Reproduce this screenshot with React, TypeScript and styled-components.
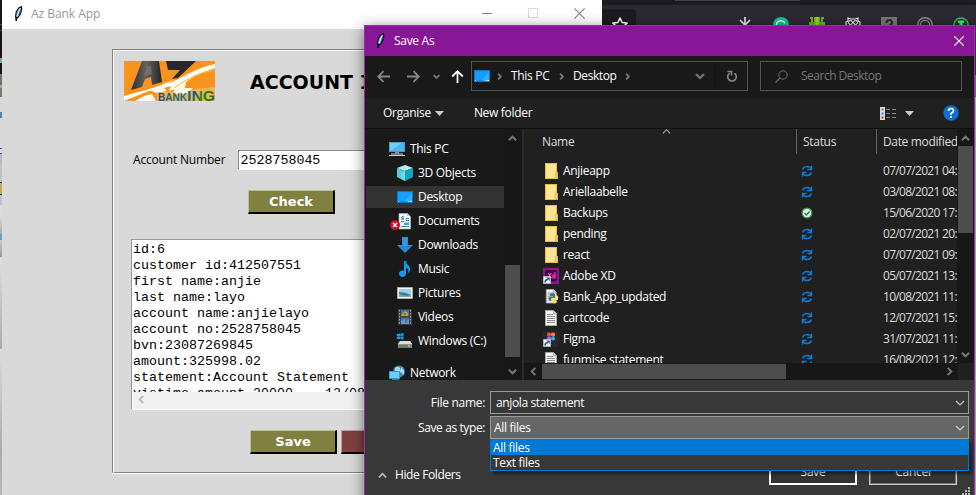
import React from "react";
import styled, { createGlobalStyle } from "styled-components";

const Global = createGlobalStyle`
  * { box-sizing: border-box; }
  body { margin: 0; background: #2b2a33; overflow: hidden; }
  svg { display: block; flex: none; }
`;

const Desktop = styled.div`
  position: relative;
  width: 976px;
  height: 495px;
  overflow: hidden;
  background: #2b2a33;
  font: 12px/16px "Open Sans", "Noto Sans", sans-serif;
`;

/* Label with an individually tuned tracking */
const Text = styled.span<{ $ls?: number; $c?: string }>`
  white-space: pre;
  letter-spacing: ${(p) => p.$ls ?? -0.3}px;
  color: ${(p) => p.$c ?? "#fff"};
`;

/* ---------- windows behind ---------- */
const Browser = styled.div`
  height: 495px;
  padding-left: 602px;
  background: linear-gradient(#1c1b22 5px, #2b2a33 5px, #2b2a33 120px, #ddd 120px);
`;
const BrowserTab = styled.div`
  width: 125px;
  height: 1px;
  margin-left: 73px;
  background: #42414d;
`;
const BrowserBar = styled.div`
  display: flex;
  align-items: flex-start;
  height: 20px;
  margin-top: 4px;
`;
const StarBox = styled.div`
  width: 34px;
  height: 20px;
  margin-top: 4px;
  padding: 8px 0 0 10px;
  border-radius: 0 4px 0 0;
  background: #1c1b22;
`;
const Extensions = styled.div`
  display: flex;
  gap: 20px;
  margin: 12px 0 0 101px;
`;
const EdgeStrip = styled.div`
  position: absolute;
  left: 0;
  top: 0;
  width: 2px;
  height: 495px;
  background: linear-gradient(
    #17161d 0 24px, #4a5058 24px 25px, #17161d 25px 30px, #4a5058 30px 31px, #15151c 31px 58px,
    #c89050 58px 60px, #68b0a0 60px 63px, #15151c 63px 74px, #707070 74px 85px, #d0a060 85px 88px,
    #777 88px 97px, #d5d9dd 97px 112px, #5580a0 112px 118px, #d8d8d8 118px 148px, #3557b5 148px 149px,
    #ddd 149px 153px, #2d6099 153px 154px, #bbb 154px 165px, #b8c4ce 165px 182px, #111 182px 183px,
    #c8a860 183px 194px, #111 194px 195px, #b8c4ce 195px 205px, #ddd 205px 215px, #aaa 234px,
    #68a0c8 234px 240px, #ccc 240px, #999 257px, #e0e0e0 257px, #aaa 349px, #ddd 349px, #aaa 450px, #b8b8b8 495px
  );
`;
const RightEdge = styled.div`
  position: absolute;
  left: 975px;
  top: 25px;
  width: 1px;
  height: 470px;
  background: linear-gradient(#55335f 50px, #c060d0 50px 72px, #e7c7ec 72px 425px, #ddd 425px);
`;

/* ---------- bank app ---------- */
const BankWindow = styled.section`
  position: absolute;
  left: 2px;
  top: 0;
  width: 600px;
  height: 495px;
  background: #d9d9d9;
`;
const BankTitle = styled.header`
  display: flex;
  align-items: center;
  height: 29px;
  padding: 0 17px 2px 9px;
  background: #fff;
`;
const BankCaption = styled.div`
  flex: 1;
  padding-left: 5px;
`;
const WindowButtons = styled.div`
  display: flex;
  gap: 35px;
`;
const Frame = styled.div`
  width: 474px;
  height: 425px;
  margin: 20px 0 0 110px;
  padding: 10px 10px 0;
  border: solid #fff;
  border-width: 0 1px 1px 0;
  box-shadow: inset 1px 1px #808080, inset 2px 2px #fff, inset -1px -1px #808080;
`;
const Brand = styled.div`
  display: flex;
  height: 42px;
  padding: 2px 0 0 2px;
`;
const Heading = styled.h1`
  margin: 9px 0 0 35px;
  font: bold 19px/24px "DejaVu Sans", sans-serif;
  white-space: pre;
`;
const SerifI = styled.span`
  font-family: "DejaVu Sans Mono", monospace;
`;
const NumberRow = styled.label`
  display: flex;
  align-items: center;
  height: 20px;
  margin: 49px 0 0 11px;
`;
const Entry = styled.div`
  width: 200px;
  height: 20px;
  margin-left: 13px;
  padding: 2px 1px;
  border: 1px solid #8a8a8a;
  border-right-color: #fff;
  border-bottom-color: #fff;
  background: #fff;
  font: 13.33px/15px "Liberation Mono", monospace;
`;
const BankButton = styled.button<{ $red?: boolean }>`
  height: 24px;
  width: 87px;
  padding: 0;
  border: solid;
  border-width: 1px 2px 2px 1px;
  border-color: ${(p) => (p.$red ? "#c49c9c #000 #000 #c49c9c" : "#c0c08f #000 #000 #c0c08f")};
  background: ${(p) => (p.$red ? "#804040" : "#808040")};
  color: #fff;
  font: bold 13px/21px "DejaVu Sans", sans-serif;
`;
const CheckRow = styled.div`
  margin: 20px 0 0 126px;
  display: flex;
`;
const Output = styled.div`
  width: 400px;
  height: 171px;
  margin: 25px 0 0 9px;
  border: 1px solid #999;
  border-right-color: #fff;
  border-bottom: 1px solid #fff;
  background: #fff;
`;
const OutputText = styled.pre`
  height: 152px;
  margin: 0;
  padding: 2px 1px 0;
  overflow: hidden;
  font: 13.33px/16px "Liberation Mono", monospace;
`;
const OutputScroll = styled.div`
  height: 17px;
  margin-left: 1px;
  padding: 3px 0 0 4px;
  background: #f0f0f0;
`;
const ButtonRow = styled.div`
  display: flex;
  gap: 4px;
  margin: 20px 0 0 128px;
`;

/* ---------- save dialog ---------- */
const Dialog = styled.section`
  position: absolute;
  left: 364px;
  top: 25px;
  width: 611px;
  height: 480px;
  border: 1px solid #9a2bab;
  background: #383838;
  box-shadow: 0 3px 14px rgba(0, 0, 0, 0.5);
`;
const DialogTitle = styled.header`
  display: flex;
  align-items: center;
  height: 30px;
  padding: 0 10px 1px 8px;
  background: #881798;
`;
const Grow = styled.div<{ $pl?: number }>`
  flex: 1;
  padding-left: ${(p) => p.$pl ?? 0}px;
`;
const NavBar = styled.nav`
  display: flex;
  align-items: center;
  height: 42px;
  padding: 0 12px 2px 12px;
  background: #191919;
`;
const NavArrows = styled.div`
  display: flex;
  align-items: center;
  width: 94px;
`;
const Gap = styled.i<{ $w: number }>`
  flex: none;
  width: ${(p) => p.$w}px;
`;
const AddressBar = styled.div`
  display: flex;
  align-items: center;
  width: 277px;
  height: 30px;
  padding-left: 2px;
  border: 1px solid #535353;
`;
const AddressCell = styled.div<{ $w: number }>`
  display: flex;
  width: ${(p) => p.$w}px;
`;
const Refresh = styled.div`
  display: flex;
  justify-content: center;
  align-items: center;
  width: 32px;
  height: 28px;
  border-left: 1px solid #121212;
`;
const SearchBox = styled.div`
  display: flex;
  align-items: center;
  width: 202px;
  height: 30px;
  margin-left: 12px;
  padding-left: 14px;
  border: 1px solid #535353;
`;
const Toolbar = styled.div`
  display: flex;
  align-items: center;
  height: 30px;
  padding: 0 15px 0 18px;
  background: #202020;
`;
const Body = styled.div`
  display: flex;
  height: 252px;
  border-top: 1px solid #111;
`;
const Tree = styled.ul`
  width: 139px;
  margin: 0;
  padding: 9px 0 0 1px;
  list-style: none;
  overflow: hidden;
  background: #191919;
`;
const TreeRow = styled.li<{ $top?: boolean; $active?: boolean; $mt?: number }>`
  display: flex;
  align-items: center;
  gap: 5px;
  height: 22px;
  margin: 0 0 2px;
  margin-top: ${(p) => p.$mt ?? 0}px;
  padding-left: ${(p) => (p.$top ? 23 : 31)}px;
  background: ${(p) => (p.$active ? "#333" : "transparent")};
`;
const VScroll = styled.div<{ $w: number }>`
  display: flex;
  flex-direction: column;
  align-items: center;
  justify-content: space-between;
  width: ${(p) => p.$w}px;
  padding: 5px 0 4px;
  background: #171717;
`;
const Thumb = styled.div<{ $w: number; $h: number; $mt?: number; $mb?: number }>`
  width: ${(p) => p.$w}px;
  height: ${(p) => p.$h}px;
  margin: ${(p) => p.$mt ?? 0}px 0 ${(p) => p.$mb ?? 0}px;
  background: #4d4d4d;
`;
const Splitter = styled.div`
  width: 4px;
  border-left: 1px solid #191919;
  border-right: 2px solid #2b2b2b;
  background: #191919;
`;
const Listing = styled.div`
  display: flex;
  flex-direction: column;
  width: 450px;
  background: #202020;
`;
const ListTop = styled.div`
  display: flex;
  height: 234px;
`;
const Table = styled.div`
  width: 433px;
  overflow: hidden;
`;
const TableRow = styled.div<{ $head?: boolean }>`
  display: grid;
  grid-template-columns: 272px 80px 90px;
  align-items: center;
  height: ${(p) => (p.$head ? 25 : 21)}px;
  margin-bottom: ${(p) => (p.$head ? 6 : 0)}px;
`;
const HeadCell = styled.div<{ $line?: boolean }>`
  display: flex;
  height: 25px;
  align-items: center;
  padding-left: ${(p) => (p.$line ? 6 : 18)}px;
  border-left: ${(p) => (p.$line ? "1px solid #636363" : "0")};
`;
const SortMark = styled.div`
  align-self: flex-start;
  margin: -2px 0 0 88px;
`;
const NameCell = styled.div`
  display: flex;
  align-items: center;
  gap: 4px;
  padding-left: 19px;
`;
const StatusCell = styled.div`
  padding-left: 5px;
`;
const DateCell = styled.div`
  padding-left: 7px;
`;
const HScroll = styled.div`
  display: flex;
  align-items: center;
  height: 17px;
  padding-left: 5px;
  background: linear-gradient(90deg, #171717 434px, #202020 434px);
`;
const Footer = styled.footer`
  padding-top: 11px;
`;
const Field = styled.div`
  display: flex;
  align-items: center;
  height: 23px;
  margin-bottom: 2px;
`;
const FieldLabel = styled.div`
  width: 125px;
  padding-right: 5px;
  text-align: right;
`;
const Combo = styled.div<{ $open?: boolean }>`
  display: flex;
  align-items: center;
  justify-content: space-between;
  width: 479px;
  height: 23px;
  padding: 0 3px 0 ${(p) => (p.$open ? 3 : 5)}px;
  border: 1px solid #9b9b9b;
  background: ${(p) => (p.$open ? "#666" : "#383838")};
`;
const Options = styled.div`
  position: absolute;
  left: 125px;
  top: 413px;
  width: 479px;
  height: 32px;
  border: 1px solid #0078d7;
  background: #383838;
  box-shadow: 3px 3px 3px rgba(0, 0, 0, 0.45);
`;
const Option = styled.div<{ $on?: boolean }>`
  height: 15px;
  padding-left: 2px;
  line-height: 15px;
  background: ${(p) => (p.$on ? "#0078d7" : "transparent")};
`;
const Actions = styled.div`
  display: flex;
  align-items: center;
  height: 30px;
  margin-top: 21px;
  padding-left: 13px;
`;
const ActionButton = styled.button<{ $main?: boolean }>`
  width: 88px;
  height: 25px;
  margin: -6px 12px 0 0;
  padding: 0;
  border: 1px solid ${(p) => (p.$main ? "#fff" : "#ccc")};
  box-shadow: ${(p) => (p.$main ? "inset 0 0 0 1px #fff" : "inset 0 0 0 1px #777")};
  background: #333;
  font: inherit;
`;
const Grip = styled.div`
  position: absolute;
  right: 3px;
  top: 461px;
`;

/* ---------- icons ---------- */
const Feather = () => (
  <svg width="15" height="17" viewBox="0 0 15 17">
    <path d="M5.200 15.500L4.600 11.500 5.200 7 7.600 3.200 10.400 1.600 10.800 4 9.400 9 7.200 12.300 6 12.800z" fill="#78afe8" stroke="#050505" strokeWidth="1.100" />
    <path d="M9 3.500L6.200 11" stroke="#fff" strokeWidth="1" />
    <path d="M9.800 4.500L7.900 10" stroke="#265c9c" strokeWidth="1" />
    <path d="M5.200 16l.6-4" stroke="#000" strokeWidth="1.300" />
  </svg>
);
const Cross = ({ c, s = 10 }: { c: string; s?: number }) => (
  <svg width={s} height={s} viewBox="0 0 10 10"><path d="M.3.3l9.4 9.4M9.7.3L.3 9.7" stroke={c} strokeWidth="1.1" /></svg>
);
const Chevron = ({ dir = "down", w = 8, c = "#777", sw = 1.8 }: { dir?: "up" | "down" | "left" | "right"; w?: number; c?: string; sw?: number }) => {
  const turn = { down: 0, left: 90, up: 180, right: 270 }[dir];
  return (
    <svg width={w} height={w} viewBox="0 0 10 10">
      <path d="M1 3l4 4 4-4" transform={`rotate(${turn} 5 5)`} fill="none" stroke={c} strokeWidth={(sw * 10) / w} />
    </svg>
  );
};
const Arrow = ({ turn = 0, c = "#858585" }: { turn?: number; c?: string }) => (
  <svg width="13" height="13" viewBox="0 0 13 13">
    <path d="M13 6.5H1.5M6.5 1.2L1.2 6.5l5.3 5.3" transform={`rotate(${turn} 6.5 6.5)`} fill="none" stroke={c} strokeWidth="1.8" />
  </svg>
);
const Star = () => (
  <svg width="16" height="16" viewBox="0 0 16 16">
    <path d="M8 1l2.1 4.5 5 .6-3.7 3.4 1 5L8 12l-4.4 2.5 1-5L.9 6.100l5-.6z" fill="none" stroke="#fbfbfe" strokeWidth="1.6" strokeLinejoin="round" />
  </svg>
);
const ExtensionIcons = () => (
  <>
    <svg width="16" height="16" viewBox="0 0 16 16"><path d="M8 0v8M3 3l5 5 5-5" fill="none" stroke="#eee" strokeWidth="1.6" /></svg>
    <svg width="16" height="16" viewBox="0 0 16 16"><circle cx="8" cy="8" r="8" fill="#15c39a" /><path d="M12 6.500A4.500 4.500 0 1 0 12 10" fill="none" stroke="#d8fff4" strokeWidth="1.500" /></svg>
    <svg width="16" height="16" viewBox="0 0 16 16"><path d="M0 5h16v4H0zM5 0h6v9H5zM1 0h3v2H1zM2 1h2v4H2zM12 0h3v2h-3zM12 1h2v4h-2z" fill="#76ad22" /><path d="M6.500 0h3v9h-3z" fill="#9ad62e" /></svg>
    <svg width="16" height="16" viewBox="0 0 16 16"><path d="M1 9V5l2-1V1l3 1h4l3-1v3l2 1v4" fill="#333" stroke="#eee" strokeWidth="1.200" /><circle cx="5.500" cy="5.500" r="2" fill="none" stroke="#fff" /><circle cx="10.500" cy="5.500" r="2" fill="none" stroke="#fff" /></svg>
    <svg width="16" height="16" viewBox="0 0 16 16"><path d="M0 0h16v16H0z" fill="#77777a" /><path d="M5.500 6c0-4 5.500-4 5.500-.5 0 2-2.500 2-2.500 4" fill="none" stroke="#29282e" strokeWidth="2" /></svg>
    <svg width="16" height="16" viewBox="0 0 16 16"><circle cx="8" cy="8" r="7.300" fill="none" stroke="#8d8d91" strokeWidth="1.400" /><circle cx="8" cy="8" r="4.600" fill="none" stroke="#8d8d91" strokeWidth="1.300" /></svg>
    <svg width="16" height="16" viewBox="0 0 16 16"><circle cx="8" cy="8" r="7" fill="#13351f" stroke="#2bc66a" strokeWidth="1.400" /><path d="M5 3.500h6V6H9.500v5h-3V6H5z" fill="#42e886" /></svg>
  </>
);
const BankLogo = () => (
  <svg width="91" height="40" viewBox="0 0 91 40">
    <defs>
      <linearGradient id="ink" x1="0" x2="1"><stop offset="0" stopColor="#292f34" /><stop offset=".5" stopColor="#68625d" /><stop offset="1" stopColor="#242426" /></linearGradient>
      <linearGradient id="word" gradientUnits="userSpaceOnUse" x1="34" y1="0" x2="91" y2="0"><stop offset="0" stopColor="#164d78" /><stop offset=".5" stopColor="#1b7396" /><stop offset=".68" stopColor="#17558a" /><stop offset=".74" stopColor="#2f8228" /><stop offset="1" stopColor="#166b2a" /></linearGradient>
    </defs>
    <path d="M0 0h91v40H0z" fill="#f7931e" />
    <path d="M7 29L18 0h17l3 21-10 3-1-8-6 2-3 8z" fill="url(#ink)" />
    <path d="M23 5l4 0 1 8-8 2z" fill="#7b7671" opacity=".7" />
    <path d="M42 0h30L54 17l-6 1 8-9H44z" fill="#29272a" />
    <path d="M0 36C20 30 42 25 58 16 69 10 80 5 91 3v4C78 12 70 20 60 27L32 32 26 29 18 33 12 40H0z" fill="#fffaf0" />
    <path d="M0 35C22 29 40 25 55 15L38 26 0 38z" fill="#fff" />
    <path d="M0 40l10-4 10-4 8 0 4 8z" fill="#f7931e" />
    <path d="M11 40l9-5 8-2 4 7z" fill="#fffaf0" />
    <path d="M40 27l7-2-3 6zM62 21C74 12 82 10 91 8v10c-10 1-20 3-30 9z" fill="#f7931e" />
    <path d="M50 27Q72 11 91 9" fill="none" stroke="#f5c040" />
    <path d="M33 32l28-3 30-3v14H33z" fill="#efb552" />
    <path d="M50 27h19l-7 6H50z" fill="#f9f5d8" />
    <text x="34" y="40" fontFamily="Liberation Sans" fontWeight="bold" fontSize="10.500" textLength="29" lengthAdjust="spacingAndGlyphs" fill="url(#word)">BANK</text>
    <text x="63" y="40" fontFamily="Liberation Sans" fontWeight="bold" fontSize="15" textLength="28" lengthAdjust="spacingAndGlyphs" fill="url(#word)">ING</text>
  </svg>
);
const DesktopIcon = () => (
  <svg width="16" height="16" viewBox="0 0 16 16"><path d="M0 2h16v12H0z" fill="#0078c8" /><path d="M1 3h14v9.500H1z" fill="#14a0fa" /><path d="M7 12.500L15 4v8.500z" fill="#2bb0ff" /><path d="M1 12.500h1M11 12.500h1M13 12.500h2" stroke="#fff" /></svg>
);
const PcIcon = () => (
  <svg width="16" height="16" viewBox="0 0 16 16"><path d="M0 1h16v10H0z" fill="#4d9cc9" /><path d="M1 2h14v8H1z" fill="#45b5f7" /><path d="M1 10V2h12z" fill="#76cdfc" /><path d="M6 11h4v1.500H6z" fill="#78909c" /><path d="M0 14.500h16M2 13h12" stroke="#c4d0d8" strokeWidth="1" /></svg>
);
const CubeIcon = () => (
  <svg width="16" height="16" viewBox="0 0 16 16"><path d="M0 3l8-3 8 3-8 3z" fill="#b3edf2" /><path d="M0 3l8 3v10l-8-4z" fill="#55cbd7" /><path d="M16 3L8 6v10l8-4z" fill="#12a5b7" /><path d="M4 8l4-2v10l-4-2z" fill="#7ee5ee" opacity=".6" /></svg>
);
const DocIcon = () => (
  <svg width="21" height="17" viewBox="0 0 21 17"><path d="M9 .5h8.500l3 3v12.500H9z" fill="#f5f7f8" stroke="#aaa" strokeWidth=".7" /><path d="M17 0v3h3" fill="#ccc" /><path d="M11 5l2-2v4m-2-1h3M15.500 5.500H19M15.500 7.500H19M11 8.500h3M11 13.500h8" stroke="#367fb0" strokeWidth="1" fill="none" /><path d="M14 9.500h5v2.500h-5z" fill="#58a2b8" /><circle cx="5" cy="12" r="5" fill="#cf0c2c" /><path d="M3 10l4 4m0-4l-4 4" stroke="#fff" strokeWidth="1.400" /></svg>
);
const DownIcon = () => (
  <svg width="16" height="16" viewBox="0 0 16 16"><path d="M5 0h6v8h5l-8 8-8-8h5z" fill="#2b88d8" /><path d="M6 1h4v8H6z" fill="#3a96e6" /></svg>
);
const MusicIcon = () => (
  <svg width="16" height="16" viewBox="0 0 16 16"><path d="M7 0h2c0 4 4 4 4 8 0 2-1 3-2 4 1-4-1-5-2-5v5.500A3.500 3.200 0 1 1 7 9.800z" fill="#0a9cf5" /></svg>
);
const PictureIcon = () => (
  <svg width="16" height="16" viewBox="0 0 16 16"><path d="M.5 2.500h15v11H.5z" fill="#f7f7f7" stroke="#aaa" /><path d="M2 4h12v8H2z" fill="#9ad1ef" /><path d="M2 7q6 0 12 3v2H2z" fill="#397f86" /><path d="M2 9q6 3 12 1v2H2z" fill="#73a8ba" /></svg>
);
const VideoIcon = () => (
  <svg width="16" height="16" viewBox="0 0 16 16"><path d="M1 0h14v16H1z" fill="#3e3e3e" /><path d="M4 1h8v6H4zM4 8.500h8V15H4z" fill="#3d72ad" /><path d="M5 5l3-3 3 2v3H4z" fill="#c7a32f" /><path d="M4 15v-3l3-2 2 3 3-3v5z" fill="#6498d4" /><path d="M2.500 1v15M13.500 1v15" stroke="#aaa" strokeDasharray="1.500 1.500" /><path d="M7 4h2v2H7zM8 12h2v2H8z" fill="#673" /></svg>
);
const DriveIcon = () => (
  <svg width="16" height="16" viewBox="0 0 16 16"><path d="M0 1l3-.4V3H0zM3.500.5L6.500 0v3h-3zM0 3.500h3V6H0zM3.500 3.500h3v3l-3-.5z" fill="#00adef" /><path d="M3 8h10l2 3v4H1v-4z" fill="#aaa" /><path d="M3 8h10l2 3H1z" fill="#ddd" /><path d="M1.500 11.500h13V15h-13z" fill="#777" /><path d="M11 13h2" stroke="#53ff53" strokeWidth="1.500" /></svg>
);
const NetworkIcon = () => (
  <svg width="16" height="16" viewBox="0 0 16 16"><circle cx="10" cy="6.500" r="6" fill="#3c88aa" /><path d="M6 3c3-3 6 0 6 3s-4 2-6 4zM12 2q5 4 2 8l-2-3z" fill="#a2d9ef" /><path d="M0 6h11v8H0z" fill="#3796d6" /><path d="M1 7h9v6H1z" fill="#73caff" /><path d="M3 15h7" stroke="#bbb" /></svg>
);
const FolderIcon = () => (
  <svg width="16" height="16" viewBox="0 0 16 16"><path d="M2 0h12v9h1v7H2z" fill="#e6c04e" /><path d="M3 1h10v14H3z" fill="#ffe591" /><path d="M12.500 9h2v6h-2z" fill="#f6d36d" stroke="#cda62c" strokeWidth=".5" /></svg>
);
const Page = () => (
  <><path d="M2.500.5h8l3 3v12h-11z" fill="#f4f4f4" stroke="#aaa" /><path d="M4 4.500h6M4 6.500h8M4 8.500h8M4 10.500h8M4 12.500h8" stroke="#8b8b8b" /><path d="M10.500 1v3h3" fill="#ccc" stroke="#999" strokeWidth=".6" /></>
);
const TextIcon = () => <svg width="16" height="16" viewBox="0 0 16 16"><Page /></svg>;
const PythonIcon = () => (
  <svg width="16" height="16" viewBox="0 0 16 16"><g transform="translate(1 0) scale(.9)"><Page /></g><path d="M7 5q3-2 5 0v4H8v3q-3 0-2-4h4V7H7z" fill="#3976a8" /><path d="M9 9h3V6q4 0 3 4v1h-4v1h3q-1 3-4 2-2-1-1-5z" fill="#ffe15a" /></svg>
);
const Shortcut = () => (
  <><path d="M.5 8.500h7v7h-7z" fill="#f5f5f5" stroke="#ccc" strokeWidth=".6" /><path d="M2 14.500q0-3 3-3" fill="none" stroke="#245a9c" strokeWidth="1.500" /><path d="M3.200 9.500h3.500V13z" fill="#245a9c" /></>
);
const XdIcon = () => (
  <svg width="16" height="16" viewBox="0 0 16 16"><path d="M0 0h16v16H0z" fill="#881798" /><rect x="2" y="2" width="12" height="11.500" rx="2" fill="#470137" /><path d="M5 5l3.500 5M8.500 5L5 10M12 4v6h-2V7h2" stroke="#ee4bd8" strokeWidth="1.200" fill="none" /><Shortcut /></svg>
);
const FigmaIcon = () => (
  <svg width="16" height="16" viewBox="0 0 16 16"><path d="M0 0h16v16H0z" fill="#27272a" /><rect x="4" y="1.500" width="4" height="4" rx="1.500" fill="#f24e1e" /><rect x="8" y="1.500" width="4" height="4" rx="1.500" fill="#ff7262" /><rect x="4" y="5.500" width="4" height="4" rx="1.500" fill="#a259ff" /><circle cx="10" cy="7.500" r="2" fill="#1abcfe" /><Shortcut /></svg>
);
const SyncIcon = () => (
  <svg width="12" height="12" viewBox="0 0 12 12"><path d="M1.500 4.500Q2.500 1.500 6 1.500T10 4M10.500 7.500Q9.500 10.500 6 10.500T2 8" fill="none" stroke="#0a7bd8" strokeWidth="1.500" /><path d="M10.500.5v4h-4M1.500 11.500v-4h4" fill="none" stroke="#0a7bd8" strokeWidth="1.400" /></svg>
);
const DoneIcon = () => (
  <svg width="12" height="12" viewBox="0 0 12 12"><circle cx="6" cy="6" r="4.900" fill="#e4e9e4" stroke="#38934a" strokeWidth="1.300" /><path d="M3.500 6l2 2 3-3.500" fill="none" stroke="#24803a" strokeWidth="1.300" /></svg>
);

const places: [string, React.FC, boolean?][] = [
  ["3D Objects", CubeIcon],
  ["Desktop", DesktopIcon, true],
  ["Documents", DocIcon],
  ["Downloads", DownIcon],
  ["Music", MusicIcon],
  ["Pictures", PictureIcon],
  ["Videos", VideoIcon],
  ["Windows (C:)", DriveIcon],
];
const DocOffset = styled.div`
  margin: 0 2px 0 -7px;
`;

const files: [string, React.FC, string][] = [
  ["Anjieapp", FolderIcon, "07/07/2021 04:"],
  ["Ariellaabelle", FolderIcon, "03/08/2021 08:"],
  ["Backups", FolderIcon, "15/06/2020 17:"],
  ["pending", FolderIcon, "02/07/2021 20:"],
  ["react", FolderIcon, "07/07/2021 09:"],
  ["Adobe XD", XdIcon, "05/07/2021 13:"],
  ["Bank_App_updated", PythonIcon, "10/08/2021 11:"],
  ["cartcode", TextIcon, "12/07/2021 15:"],
  ["Figma", FigmaIcon, "31/07/2021 11:"],
  ["funmise statement", TextIcon, "16/08/2021 12:"],
];

const output = `id:6
customer id:412507551
first name:anjie
last name:layo
account name:anjielayo
account no:2528758045
bvn:23087269845
amount:325998.02
statement:Account Statement
vistime amount 20000    12/08`;

export default function App() {
  return (
    <Desktop>
      <Global />
      <Browser>
        <BrowserTab />
        <BrowserBar>
          <StarBox><Star /></StarBox>
          <Extensions><ExtensionIcons /></Extensions>
        </BrowserBar>
      </Browser>
      <EdgeStrip />

      <BankWindow>
        <BankTitle>
          <Feather />
          <BankCaption><Text $c="#999" $ls={-0.05}>Az Bank App</Text></BankCaption>
          <WindowButtons>
            <svg width="11" height="11"><path d="M0 5.500h10" stroke="#888" /></svg>
            <svg width="11" height="11"><path d="M.5.5h9v9h-9z" fill="none" stroke="#ddd" /></svg>
            <Cross c="#888" s={11} />
          </WindowButtons>
        </BankTitle>
        <Frame>
          <Brand>
            <BankLogo />
            <Heading>ACCOUNT <SerifI>I</SerifI></Heading>
          </Brand>
          <NumberRow>
            <Text $c="#000" $ls={-0.18}>Account Number</Text>
            <Entry>2528758045</Entry>
          </NumberRow>
          <CheckRow><BankButton>Check</BankButton></CheckRow>
          <Output>
            <OutputText>{output}</OutputText>
            <OutputScroll><Chevron dir="left" c="#bbb" w={9} sw={2} /></OutputScroll>
          </Output>
          <ButtonRow>
            <BankButton>Save</BankButton>
            <BankButton $red />
          </ButtonRow>
        </Frame>
      </BankWindow>

      <RightEdge />
      <Dialog>
        <DialogTitle>
          <Feather />
          <Grow $pl={6}><Text>Save As</Text></Grow>
          <Cross c="#fff" />
        </DialogTitle>
        <NavBar>
          <NavArrows>
            <Arrow /><Gap $w={17} /><Arrow turn={180} /><Gap $w={13} />
            <Chevron w={7} /><Gap $w={11} /><Arrow turn={90} c="#fff" />
          </NavArrows>
          <AddressBar>
            <AddressCell $w={22}><DesktopIcon /></AddressCell>
            <AddressCell $w={15}><Chevron dir="right" w={7} /></AddressCell>
            <AddressCell $w={47}><Text>This PC</Text></AddressCell>
            <AddressCell $w={15}><Chevron dir="right" w={7} /></AddressCell>
            <AddressCell $w={51}><Text $ls={-0.4}>Desktop</Text></AddressCell>
            <Grow><Chevron dir="right" w={7} /></Grow>
            <Chevron w={10} sw={2} /><Gap $w={10} />
            <Refresh>
              <svg width="12" height="13" viewBox="0 0 12 13"><path d="M8.500 3.200A4.300 4.300 0 1 1 3.500 3.200M1.500 1.500h4V5.500" fill="none" stroke="#858585" strokeWidth="1.700" /></svg>
            </Refresh>
          </AddressBar>
          <SearchBox>
            <svg width="13" height="13" viewBox="0 0 13 13"><circle cx="8" cy="5" r="4.200" fill="none" stroke="#6b6b6b" /><path d="M5 8L.5 12.500" stroke="#6b6b6b" strokeWidth="1.200" /></svg>
            <Gap $w={13} /><Text $c="#777" $ls={-0.5}>Search Desktop</Text>
          </SearchBox>
        </NavBar>
        <Toolbar>
          <Text>Organise</Text><Gap $w={4} />
          <svg width="9" height="5"><path d="M0 0h9L4.500 5z" fill="#ccc" /></svg>
          <Gap $w={30} />
          <Grow><Text>New folder</Text></Grow>
          <svg width="17" height="13" viewBox="0 0 17 13"><path d="M0 0h5v13H0z" fill="#ddd" /><path d="M1.500 2.500h2" stroke="#777" strokeWidth="2" /><path d="M1.500 6.500h2" stroke="#2388dd" strokeWidth="2" /><path d="M1.500 10.500h2" stroke="#cf332b" strokeWidth="2" /><path d="M6 2.500h4m2 0h4M6 6.500h4m2 0h4M6 10.500h4m2 0h4" stroke="#888" /></svg>
          <Gap $w={8} />
          <svg width="9" height="5"><path d="M0 0h9L4.500 5z" fill="#ccc" /></svg>
          <Gap $w={29} />
          <svg width="16" height="16" viewBox="0 0 16 16"><circle cx="8" cy="8" r="7.700" fill="#0b6fd4" /><path d="M5.500 6Q5.500 3.500 8 3.500T10.500 6Q10.500 7.200 8 8.500v1.300M8 11v2" fill="none" stroke="#fff" strokeWidth="1.700" /></svg>
        </Toolbar>
        <Body>
          <Tree>
            <TreeRow $top><PcIcon /><Text>This PC</Text></TreeRow>
            {places.map(([name, Icon, active]) => (
              <TreeRow key={name} $active={active}>
                {name === "Documents" ? <DocOffset><Icon /></DocOffset> : <Icon />}
                <Text>{name}</Text>
              </TreeRow>
            ))}
            <TreeRow $top $mt={10}><NetworkIcon /><Text>Network</Text></TreeRow>
          </Tree>
          <VScroll $w={16}>
            <Chevron dir="up" w={9} sw={2} />
            <Thumb $w={15} $h={92} $mt={112} />
            <Chevron w={9} sw={2} />
          </VScroll>
          <Splitter />
          <Listing>
            <ListTop>
              <Table>
                <TableRow $head>
                  <HeadCell>
                    <Text $c="#ddd">Name</Text>
                    <SortMark><Chevron dir="up" w={9} sw={1.1} c="#aaa" /></SortMark>
                  </HeadCell>
                  <HeadCell $line><Text $c="#ddd">Status</Text></HeadCell>
                  <HeadCell $line><Text $c="#ddd" $ls={-0.35}>Date modified</Text></HeadCell>
                </TableRow>
                {files.map(([name, Icon, date]) => (
                  <TableRow key={name}>
                    <NameCell><Icon /><Text>{name}</Text></NameCell>
                    <StatusCell>{name === "Backups" ? <DoneIcon /> : <SyncIcon />}</StatusCell>
                    <DateCell><Text $c="#ddd" $ls={-0.7}>{date}</Text></DateCell>
                  </TableRow>
                ))}
              </Table>
              <VScroll $w={17}>
                <Chevron dir="up" w={9} sw={2} />
                <Thumb $w={15} $h={87} $mb={114} />
                <Chevron w={9} sw={2} />
              </VScroll>
            </ListTop>
            <HScroll>
              <Chevron dir="left" w={9} sw={2} /><Gap $w={4} />
              <Thumb $w={244} $h={15} /><Gap $w={159} />
              <Chevron dir="right" w={9} sw={2} />
            </HScroll>
          </Listing>
        </Body>
        <Footer>
          <Field>
            <FieldLabel><Text>File name:</Text></FieldLabel>
            <Combo><Text $ls={-0.38}>anjola statement</Text><Chevron w={10} sw={1.2} c="#ccc" /></Combo>
          </Field>
          <Field>
            <FieldLabel><Text $ls={-0.4}>Save as type:</Text></FieldLabel>
            <Combo $open><Text>All files</Text><Chevron w={10} sw={1.2} c="#ccc" /></Combo>
          </Field>
          <Actions>
            <Chevron dir="up" w={9} sw={1.8} c="#bbb" /><Gap $w={8} />
            <Grow><Text $ls={-0.38}>Hide Folders</Text></Grow>
            <ActionButton $main><Text>Save</Text></ActionButton>
            <ActionButton><Text>Cancel</Text></ActionButton>
            <Gap $w={5} />
          </Actions>
        </Footer>
        <Options>
          <Option $on><Text>All files</Text></Option>
          <Option><Text>Text files</Text></Option>
        </Options>
        <Grip>
          <svg width="9" height="9"><path d="M6 1h2M3 4h2M6 4h2M0 7h2M3 7h2M6 7h2" stroke="#bbb" strokeWidth="2" /></svg>
        </Grip>
      </Dialog>
    </Desktop>
  );
}
